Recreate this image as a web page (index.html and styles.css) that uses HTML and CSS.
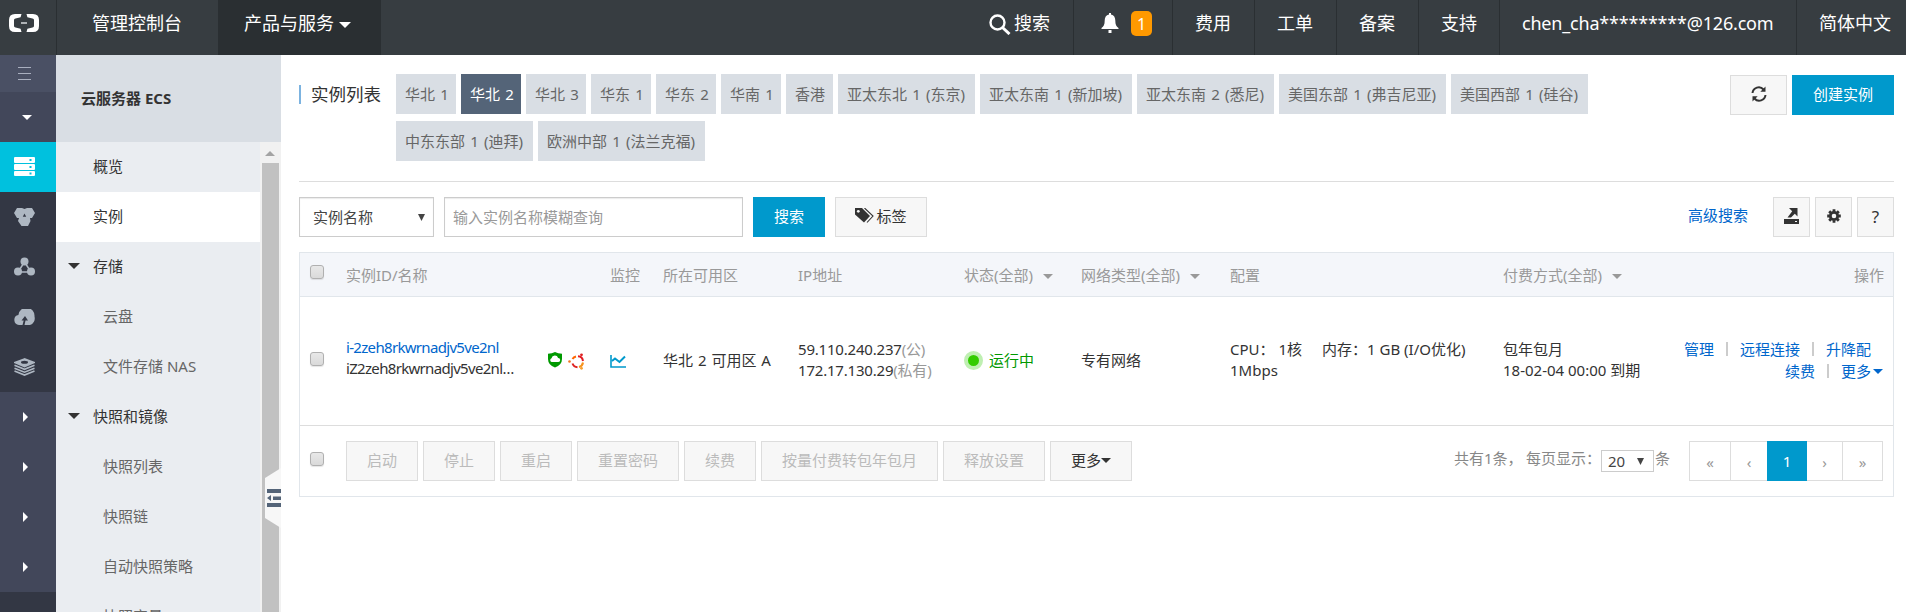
FILE: index.html
```html
<!DOCTYPE html>
<html lang="zh-CN">
<head>
<meta charset="utf-8">
<title>云服务器 ECS</title>
<link rel="stylesheet" href="styles.css">
</head>
<body>
<header class="topbar">
  <a class="logo"><svg width="30" height="18" viewBox="0 0 30 18"><path d="M12.5 0 11.6 3.2 6.5 4.4Q5 4.8 5 6v6q0 1.2 1.5 1.6l5.1 1.2.9 3.2H6q-6 0-6-6V6Q0 0 6 0zM17.5 0l.9 3.2 5.1 1.2Q25 4.8 25 6v6q0 1.2-1.5 1.6l-5.1 1.2-.9 3.2H24q6 0 6-6V6q0-6-6-6z" fill="#fff"/><path d="M12 8h6v2h-6z" fill="#aeb2b5"/></svg></a>
  <a class="top-item console">管理控制台</a>
  <a class="top-item products">产品与服务<i class="caret"></i></a>
  <span class="spacer"></span>
  <a class="top-item search"><svg width="22" height="21" viewBox="0 0 22 21" fill="none" stroke="#fff"><circle cx="8.5" cy="8.5" r="7" stroke-width="2.4"/><path d="m13.5 13.5 7 6.5" stroke-width="3"/></svg>搜索</a>
  <a class="top-item bell"><svg width="18" height="20" viewBox="0 0 18 20" fill="#fff"><path d="M8 0h2v1.5c3 .6 4.300 3 4.300 6 0 4 1 6 3.200 7.500V16H.5v-1C2.700 13.500 3.700 11.500 3.700 7.500c0-3 1.300-5.400 4.300-6zM7.500 17h3v3h-3z"/></svg><b class="badge">1</b></a>
  <a class="top-item w82">费用</a>
  <a class="top-item w82">工单</a>
  <a class="top-item w82">备案</a>
  <a class="top-item w81">支持</a>
  <a class="top-item mail"><span>chen_cha*********@126.com</span></a>
  <a class="top-item lang">简体中文</a>
</header>
<div class="body">
  <nav class="rail">
    <a class="rail-menu"><svg width="13" height="15" viewBox="0 0 13 15" stroke="#a9afbf"><path d="M0 1.500h13M0 7.500h13M0 13.500h13"/></svg></a>
    <a><i class="caret small"></i></a>
    <a class="current"><svg width="21" height="20" viewBox="0 0 21 20"><path d="M1 0h19q1 0 1 1v4q0 1-1 1H1Q0 6 0 5V1Q0 0 1 0zM1 7h19q1 0 1 1v4q0 1-1 1H1q-1 0-1-1V8q0-1 1-1zM1 14h19q1 0 1 1v3q0 1-1 1H1q-1 0-1-1v-3q0-1 1-1z" fill="#fff"/><path d="M15.500 2h2v2h-2zM15.500 9h2v2h-2zM15.500 15.500h2v2h-2z" fill="#00c1de"/></svg></a>
    <a class="deep"><svg width="21" height="20" viewBox="0 0 21 20" fill="#aeb7c2"><path d="M3 1h5l2.500 1L13 1h5l3 5-3 5h-2l.500 3-2.500 5H7.500L4 14l1-3H3L0 6z"/><path d="M10.500 6.500 8.800 9.700h3.400z" fill="#333744"/></svg></a>
    <a class="deep"><svg width="21" height="20" viewBox="0 0 21 20" fill="#aeb7c2"><circle cx="10.500" cy="4.500" r="4"/><circle cx="4" cy="14.500" r="4"/><circle cx="17" cy="14.500" r="4"/><path d="M10.500 5 4 15h13z" fill="none" stroke="#aeb7c2" stroke-width="1.500"/></svg></a>
    <a class="deep"><svg width="21" height="17" viewBox="0 0 21 17"><path d="M5 16a5 5 0 0 1-.6-9.900A8 8 0 0 1 20.500 7.500 7 7 0 0 1 16 16z" fill="#aeb7c2"/><path d="M11 7 7.500 11.500h2.200L8.500 16h2l1-4.500h2.500z" fill="#333744"/></svg></a>
    <a class="deep"><svg width="21" height="18" viewBox="0 0 21 18" fill="none" stroke="#aeb7c2" stroke-width="1.700"><path d="M10.500 1 .8 4.500l9.700 4 9.700-4z" fill="#aeb7c2"/><path d="m.5 7.300 10 4 10-4M.5 10.200l10 4 10-4M.5 13l10 4 10-4"/><ellipse cx="10.500" cy="4.200" rx="3.500" ry="1.500" fill="#333744" stroke="none"/></svg></a>
    <a><i class="tri"></i></a>
    <a><i class="tri"></i></a>
    <a><i class="tri"></i></a>
    <a><i class="tri"></i></a>
    <a class="deep"></a>
  </nav>
  <aside class="side">
    <h2>云服务器 ECS</h2>
    <div class="side-scroll">
      <ul class="menu">
        <li>概览</li>
        <li class="on">实例</li>
        <li class="group"><i class="caret"></i>存储</li>
        <li class="sub">云盘</li>
        <li class="sub">文件存储 NAS</li>
        <li class="group"><i class="caret"></i>快照和镜像</li>
        <li class="sub">快照列表</li>
        <li class="sub">快照链</li>
        <li class="sub">自动快照策略</li>
        <li class="sub">快照容量</li>
      </ul>
      <div class="scrollbar"><i class="up"></i><div class="thumb"></div></div>
    </div>
    <svg class="handle" width="16" height="60" viewBox="0 0 16 60"><path d="M0 10 16 0v60L0 50z" fill="#f7f7f7"/><path d="M2 21h14v4H2zM8 28.500h8v3.500H8zM2 35h14v4H2zM2 30l4-3v6z" fill="#546478"/></svg>
  </aside>
  <main>
    <section class="head">
      <h1>实例列表</h1>
      <div class="regions">
        <a class="w60">华北 1</a><a class="w60 on">华北 2</a><a class="w60">华北 3</a><a class="w60">华东 1</a><a class="w60">华东 2</a><a class="w60">华南 1</a><a class="w47">香港</a><a class="w137">亚太东北 1 (东京)</a><a class="w152">亚太东南 1 (新加坡)</a><a class="w137">亚太东南 2 (悉尼)</a><a class="w167">美国东部 1 (弗吉尼亚)</a><a class="w137">美国西部 1 (硅谷)</a><a class="w137">中东东部 1 (迪拜)</a><a class="w167">欧洲中部 1 (法兰克福)</a>
      </div>
      <div class="head-actions">
        <a class="btn refresh"><svg width="16" height="16" viewBox="0 0 16 16" fill="none" stroke="#333" stroke-width="2"><path d="M1.500 7A6.300 6.300 0 0 1 12.500 3.500M14.500 9A6.300 6.300 0 0 1 3.500 12.500"/><path d="M14.500.5v5.200H9.300zM1.500 15.500v-5.200h5.200z" fill="#333" stroke="none"/></svg></a>
        <a class="btn primary create">创建实例</a>
      </div>
    </section>
    <section class="filter">
      <div class="field select">实例名称<i class="drop"></i></div>
      <div class="field input">输入实例名称模糊查询</div>
      <a class="btn primary do-search">搜索</a>
      <a class="btn tags"><svg width="20" height="15" viewBox="0 0 20 15"><path d="M0 0h7l8 8-6 6.500L0 6.500z" fill="#333"/><circle cx="3.300" cy="3.300" r="1.400" fill="#f7f7f7"/><path d="M9.500 0 18 8l-6 6.500" fill="none" stroke="#333" stroke-width="1.100"/></svg>标签</a>
      <a class="advanced">高级搜索</a>
      <a class="btn sq"><svg width="15" height="16" viewBox="0 0 15 16" fill="#333"><path d="M0 11h15v5H0zM5 0h8.500v8.500l-2.700-2.700L7 9.500H3.500l4.700-6.300z"/><path d="M11 13h2v1h-2z" fill="#f7f7f7"/></svg></a>
      <a class="btn sq"><svg width="14" height="14" viewBox="0 0 14 14"><circle cx="7" cy="7" r="3.700" fill="none" stroke="#333" stroke-width="2.800"/><path d="M7 .2v2.500M7 11.300v2.500M.2 7h2.500M11.300 7h2.500M2.200 2.200l1.700 1.700M10.100 10.100l1.700 1.700M2.200 11.800l1.700-1.700M10.100 3.900l1.700-1.700" stroke="#333" stroke-width="2.800"/></svg></a>
      <a class="btn sq help">?</a>
    </section>
    <section class="table">
      <div class="row thead">
        <span><i class="check"></i></span><span>实例ID/名称</span><span></span><span>监控</span><span>所在可用区</span><span>IP地址</span>
        <span>状态(全部)<i class="caret small"></i></span><span>网络类型(全部)<i class="caret small"></i></span><span>配置</span><span>付费方式(全部)<i class="caret small"></i></span><span class="right">操作</span>
      </div>
      <div class="row data">
        <span><i class="check"></i></span>
        <span class="name"><a class="id">i-2zeh8rkwrnadjv5ve2nl</a><br><em>iZ2zeh8rkwrnadjv5ve2nl…</em></span>
        <span class="os"><svg width="14" height="16" viewBox="0 0 14 16"><path d="M7 0q3 1.800 7 1.800V7q0 6-7 8.500Q0 13 0 7V1.800Q4 1.800 7 0z" fill="#090"/><path d="M3.700 10a2 2 0 0 1-.2-3.800 3.400 3.400 0 0 1 6.600-.2A2 2 0 0 1 10.300 10z" fill="#fff"/></svg><svg class="ubuntu" width="17" height="17" viewBox="0 0 17 17"><g fill="none" stroke-width="2"><path d="M4.500 6A5.500 5.500 0 0 1 8 3.500" stroke="#f60"/><path d="M10 3.300A5.400 5.400 0 0 1 15 8" stroke="#e31b23"/><path d="M15 9.500A5.600 5.600 0 0 1 11 14" stroke="#f7931e"/><path d="M9.500 14.200A5.500 5.500 0 0 1 4.500 10.500" stroke="#d22"/></g><circle cx="1.500" cy="8.500" r="1.300" fill="#f47421"/><circle cx="13.500" cy="1.800" r="1.400" fill="#d22"/><circle cx="13.500" cy="15.300" r="1.400" fill="#f7a030"/></svg></span>
        <span class="mon"><svg width="16" height="13" viewBox="0 0 16 13" fill="none" stroke="#09c"><path d="M1 0v12h15" stroke-width="1.600"/><path d="m2 6 3-2.500L9.500 7 15 1.500" stroke-width="2"/></svg></span>
        <span class="zone">华北 2 可用区 A</span>
        <span class="ip">59.110.240.237<small>(公)</small><br>172.17.130.29<small>(私有)</small></span>
        <span class="run"><i class="dot"></i>运行中</span>
        <span class="net">专有网络</span>
        <span class="cfg">CPU： 1核<b>内存：1 GB (I/O优化)</b><br>1Mbps</span>
        <span class="pay">包年包月<br>18-02-04 00:00 到期</span>
        <span class="ops"><span class="ops-first"><a>管理</a><i></i><a>远程连接</a><i></i><a>升降配</a></span><span><a>续费</a><i></i><a>更多</a><b class="caret small"></b></span></span>
      </div>
      <div class="foot">
        <i class="check"></i>
        <div class="batch">
          <a class="btn off w72">启动</a><a class="btn off w72">停止</a><a class="btn off w72">重启</a><a class="btn off w102">重置密码</a><a class="btn off w72">续费</a><a class="btn off w177">按量付费转包年包月</a><a class="btn off w102">释放设置</a><a class="btn w82b">更多<i class="caret small"></i></a>
        </div>
        <div class="count"><span class="total">共有1条，</span><span class="per">每页显示：</span><span class="size">20<i class="drop"></i></span>条</div>
        <div class="pager"><a>«</a><a>‹</a><a class="on">1</a><a>›</a><a>»</a></div>
      </div>
    </section>
  </main>
</div>
</body>
</html>
```
FILE: styles.css
```css
* { box-sizing: border-box; }
body {
  margin: 0;
  height: 612px;
  overflow: hidden;
  background: #fff;
  color: #333;
  font: 15px/21px "Noto Sans", "Noto Sans CJK SC", sans-serif;
  white-space: nowrap;
}
i, em { font-style: normal; }
svg { display: block; flex: none; }
.caret {
  display: inline-block;
  border: 6px solid transparent;
  border-top-color: currentColor;
  border-bottom: 0;
  flex: none;
}
.caret.small { border-width: 5px 5px 0; }

.topbar { display: flex; height: 55px; background: #373d41; color: #fff; font-size: 18px; line-height: 47px; }
.logo { width: 57px; padding: 14px 0 0 9px; border-right: 1px solid #2a2f32; }
.top-item { display: flex; border-left: 1px solid #2a2f32; padding-left: 22px; }
.console { width: 161px; padding-left: 35px; border: 0; }
.products { width: 163px; padding-left: 25px; background: #2a2f32; }
.products .caret { margin: 22px 0 0 5px; }
.spacer { flex: 1; }
.search { width: 84px; border: 0; padding: 0; }
.search svg { margin: 14px 3px 0 0; }
.bell { width: 99px; padding-left: 27px; }
.bell svg { margin-top: 13px; }
.badge { width: 21px; height: 25px; margin: 11px 0 0 12px; border-radius: 5px; background: #f90; font-weight: 400; font-size: 16px; line-height: 26px; text-align: center; }
.w82 { width: 82px; }
.w81 { width: 81px; }
.mail { width: 297px; letter-spacing: -.2px; }
.lang { width: 110px; }

.body { display: flex; height: 557px; }
.rail { flex: none; width: 56px; background: #42475a; overflow: hidden; }
.rail a { display: flex; height: 50px; align-items: center; padding-left: 14px; }
.rail .rail-menu { height: 37px; background: #4a5064; padding-left: 18px; }
.rail .caret { color: #fff; margin-left: 8px; }
.rail .current { background: #00c1de; }
.rail .deep { background: #333744; }
.tri { margin-left: 9px; border: 5px solid transparent; border-left-color: #fff; border-right: 0; }

.side { flex: none; position: relative; width: 225px; background: #eaedf1; }
.side h2 { height: 87px; margin: 0; padding-left: 25px; background: #d9dee4; font-size: 15px; line-height: 87px; }
.side-scroll { display: flex; height: 470px; overflow: hidden; }
.menu { width: 204px; margin: 0; padding: 0; list-style: none; }
.menu li { display: flex; height: 50px; padding-left: 37px; line-height: 49px; }
.menu .on { background: #fff; }
.menu .group { padding-left: 12px; }
.menu .caret { margin: 21px 13px 0 0; }
.menu .sub { padding-left: 47px; color: #666; }
.scrollbar { width: 21px; background: #f1f1f1; }
.up { display: block; width: 10px; margin: 9px 0 7px 5px; border: 5px solid transparent; border-top: 0; border-bottom-color: #a3a3a3; }
.thumb { height: 449px; margin-left: 2px; width: 17px; background: #c1c1c1; }
.handle { position: absolute; left: 209px; top: 413px; }

main { flex: 1; min-width: 0; padding: 19px 12px 0 18px; }
.head { display: flex; height: 108px; border-bottom: 1px solid #ddd; }
h1 { width: 97px; height: 19px; margin: 11px 0 0; padding-left: 10px; border-left: 2px solid #7cb3e0; font-size: 17.500px; line-height: 19px; font-weight: 400; }
.regions { display: flex; flex-wrap: wrap; align-content: flex-start; width: 1200px; gap: 7px 5px; }
.regions a { height: 40px; padding-left: 9px; background: #d9dee4; color: #666; line-height: 40px; word-spacing: 1.300px; }
.regions .on { background: #546478; color: #fff; }
.w60 { width: 60px; }
.w47 { width: 47px; }
.w137 { width: 137px; }
.w152 { width: 152px; }
.w167 { width: 167px; }
.head-actions { display: flex; gap: 5px; margin: 1px 0 0 auto; }
.btn { display: flex; height: 40px; align-items: center; justify-content: center; padding-bottom: 2px; border: 1px solid #ddd; background: #f7f7f7; }
.primary { border: 0; background: #09c; color: #fff; }
.refresh { width: 57px; }
.create { width: 102px; }

.filter { display: flex; margin-top: 15px; }
.field { height: 40px; border: 1px solid #ccc; box-shadow: inset 0 1px 1px rgba(0,0,0,.08); line-height: 38px; }
.select { display: flex; width: 135px; padding: 0 8px 0 13px; color: #444; }
.drop { margin: 16px 0 0 auto; width: 7px; height: 7px; background: #444; clip-path: polygon(0 0, 100% 0, 50% 100%); }
.input { width: 299px; margin-left: 10px; padding-left: 8px; color: #999; }
.do-search { width: 72px; margin-left: 10px; }
.tags { width: 92px; margin-left: 10px; gap: 1px; }
.tags svg { margin-top: -1px; }
.advanced { margin-left: auto; margin-right: 20px; line-height: 37px; color: #06c; }
.sq { width: 37px; margin-left: 5px; }
.help { font-size: 17px; }

.table { margin-top: 15px; border: 1px solid #e1e6eb; }
.row { display: grid; grid-template-columns: 46px 204px 60px 53px 135px 166px 117px 149px 273px 170px 1fr; padding-right: 9px; }
.row > span { display: block; }
.thead { height: 44px; background: #f4f6fa; border-bottom: 1px solid #e1e6eb; color: #999; line-height: 44px; }
.thead .caret { margin-left: 10px; vertical-align: 2px; }
.right { text-align: right; }
.check { display: block; width: 14px; height: 14px; margin: 12px 0 0 10px; border: 1px solid #b0b0b0; border-radius: 3px; background: linear-gradient(#e8e8e8, #dadada); box-shadow: 0 1px 1px rgba(0,0,0,.1); }
.data { height: 129px; border-bottom: 1px solid #ddd; }
.data .check { margin-top: 55px; }
.name { padding-top: 40px; letter-spacing: -.68px; }
.id, .advanced, .ops { color: #06c; }
.row .os { display: flex; padding-top: 55px; margin-left: -2px; }
.ubuntu { margin: 1px 0 0 6px; }
.mon { padding-top: 58px; }
.zone, .net { padding-top: 53px; word-spacing: 1px; }
.ip, .cfg, .pay { padding-top: 42px; }
.ip { letter-spacing: -.2px; }
.ip small { font-size: 15px; color: #999; }
.row .run { display: flex; padding-top: 53px; color: #090; }
.dot { width: 19px; height: 19px; margin: 1px 6px 0 0; border: 4.500px solid #bfefb2; border-radius: 50%; background: #3c0; }
.cfg b { margin-left: 20px; font-weight: 400; }
.row .ops { display: flex; flex-direction: column; align-items: flex-end; padding-top: 41px; }
.ops span { display: flex; height: 22px; line-height: 22px; }
.ops .ops-first { margin-right: 13px; }
.ops i { width: 2px; height: 14px; margin: 4px 12px; background: #ccc; }
.ops .caret { margin: 9px 1px 0 2px; }

.foot { display: flex; height: 70px; }
.foot > .check { margin-top: 26px; }
.batch { display: flex; gap: 5px; margin: 15px 0 0 22px; }
.off { color: #bbb; }
.w72 { width: 72px; }
.w102 { width: 102px; }
.w177 { width: 177px; }
.w82b { width: 82px; }
.count { display: flex; margin-left: auto; padding-top: 22px; color: #888; }
.total { width: 72px; }
.per { width: 75px; }
.size { display: flex; width: 53px; height: 22px; margin: 2px 1px 0 0; padding: 0 9px 0 6px; border: 1px solid #ccc; color: #444; line-height: 21px; }
.size .drop { margin-top: 7px; }
.pager { display: flex; height: 40px; margin: 15px 10px 0 19px; border: 1px solid #ddd; color: #999; }
.pager a { width: 40px; line-height: 40px; text-align: center; }
.pager a + a { width: 37px; border-left: 1px solid #ddd; }
.pager a.on { width: 40px; margin: -1px 0; border: 0; background: #09c; color: #fff; line-height: 41px; }
.pager a.on + a { width: 35px; border: 0; }
.pager a:last-child { width: 40px; }
```
